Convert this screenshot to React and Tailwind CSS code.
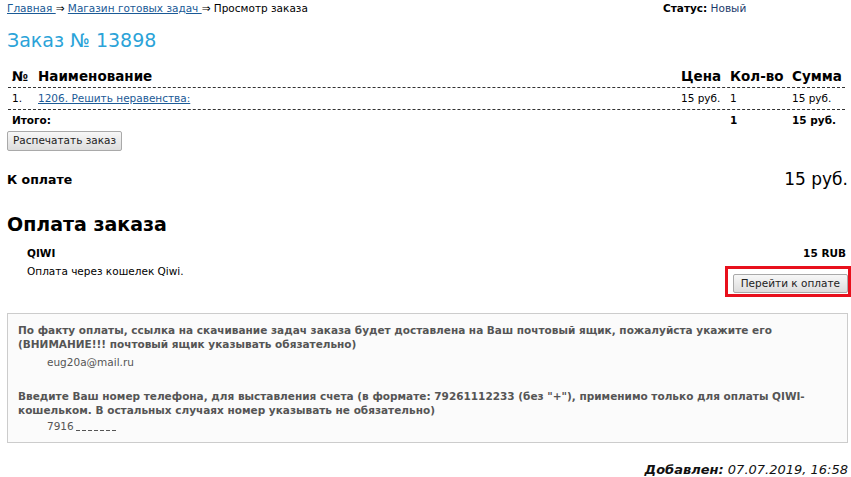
import React from 'react';

function Row({ children, className = '' }) {
  return (
    <div className={`grid grid-cols-[26px_1fr_49px_62px_57px] items-center ${className}`}>
      {children}
    </div>
  );
}

function Btn({ children, className = '' }) {
  return (
    <button className={`border border-[#a9a9a9] rounded-[2px] bg-gradient-to-b from-[#f7f7f7] to-[#dddddd] text-[10.5px] text-[#222] ${className}`}>
      {children}
    </button>
  );
}

function App() {
  return (
    <div className="w-[851px] h-[477px] bg-white text-black text-[10.5px] font-['DejaVu_Sans',sans-serif] pl-[7px] pr-[3px] overflow-hidden">
      <div className="flex justify-between h-[17px] items-center">
        <div>
          <a href="#" className="text-[#1a5a96] underline">Главная </a>
          <span> ⇒ </span>
          <a href="#" className="text-[#1a5a96] underline">Магазин готовых задач </a>
          <span> ⇒ Просмотр заказа</span>
        </div>
        <div className="w-[185px]">
          <b>Статус:</b> <span className="text-[#1a3a6a]">Новый</span>
        </div>
      </div>

      <h1 className="text-[19px] text-[#2ba3d8] mt-[10px] h-[26px] leading-[26px]">Заказ № 13898</h1>

      <div className="mt-[12px] ml-px mr-[3px]">
        <Row className="h-[23px] border-b border-dashed border-[#333] text-[13.5px] font-bold">
          <div className="pl-1">№</div>
          <div className="pl-1">Наименование</div>
          <div className="pl-1">Цена</div>
          <div className="pl-1">Кол-во</div>
          <div className="pl-1">Сумма</div>
        </Row>
        <Row className="h-[22px] border-b border-dashed border-[#333]">
          <div className="pl-1">1.</div>
          <div className="pl-1"><a href="#" className="text-[#1a5a96] underline">1206. Решить неравенства:</a></div>
          <div className="pl-1">15 руб.</div>
          <div className="pl-1">1</div>
          <div className="pl-1">15 руб.</div>
        </Row>
        <Row className="h-[21px] font-bold">
          <div className="pl-1 col-span-2">Итого:</div>
          <div></div>
          <div className="pl-1">1</div>
          <div className="pl-1">15 руб.</div>
        </Row>
      </div>

      <Btn className="mt-[0px] h-[20px] px-[5px]">Распечатать заказ</Btn>

      <div className="flex justify-between items-center mt-[19px] h-[20px]">
        <div className="text-[12.5px] font-bold">К оплате</div>
        <div className="text-[17px]">15 руб.</div>
      </div>

      <h2 className="text-[19px] font-bold mt-[22px] h-[24px] leading-[24px]">Оплата заказа</h2>

      <div className="pl-[20px] mt-[8px] flex justify-between">
        <div>
          <div className="font-bold h-[18px] leading-[18px]">QIWI</div>
          <div className="h-[18px] leading-[18px]">Оплата через кошелек Qiwi.</div>
        </div>
        <div className="flex flex-col items-end">
          <div className="font-bold h-[18px] leading-[18px] pr-[2px]">15 RUB</div>
          <div className="mt-[4px] mr-[-3px] border-[3px] border-[#e8101c] pt-[5px] pl-[5px] pr-[0px] pb-[1px]">
            <Btn className="h-[19px] px-[7px]">Перейти к оплате</Btn>
          </div>
        </div>
      </div>

      <div className="mt-[16px] h-[130px] border border-[#cccccc] bg-[#fbfbfb] px-[10px] pt-[9px] text-[#555] font-bold">
        <div className="leading-[14px]">
          По факту оплаты, ссылка на скачивание задач заказа будет доставлена на Ваш почтовый ящик, пожалуйста укажите его (ВНИМАНИЕ!!! почтовый ящик указывать обязательно)
        </div>
        <div className="font-normal pl-[29px] mt-[3px] h-[16px] leading-[16px]">eug20a@mail.ru</div>
        <div className="leading-[14px] mt-[19px]">
          Введите Ваш номер телефона, для выставления счета (в формате: 79261112233 (без "+"), применимо только для оплаты QIWI-кошельком. В остальных случаях номер указывать не обязательно)
        </div>
        <div className="font-normal pl-[29px] mt-[1px] h-[16px] leading-[16px] flex items-center">
          <span>7916</span>
          <span className="flex gap-[2px] ml-[2px] mt-[9px]">
            {[0, 1, 2, 3, 4, 5, 6].map((i) => (
              <span key={i} className="w-[4px] h-px bg-[#555]"></span>
            ))}
          </span>
        </div>
      </div>

      <div className="text-right mt-[19px] italic text-[13px] leading-[16px] text-[#111]">
        <b>Добавлен:</b> 07.07.2019, 16:58
      </div>
    </div>
  );
}

export default App;
